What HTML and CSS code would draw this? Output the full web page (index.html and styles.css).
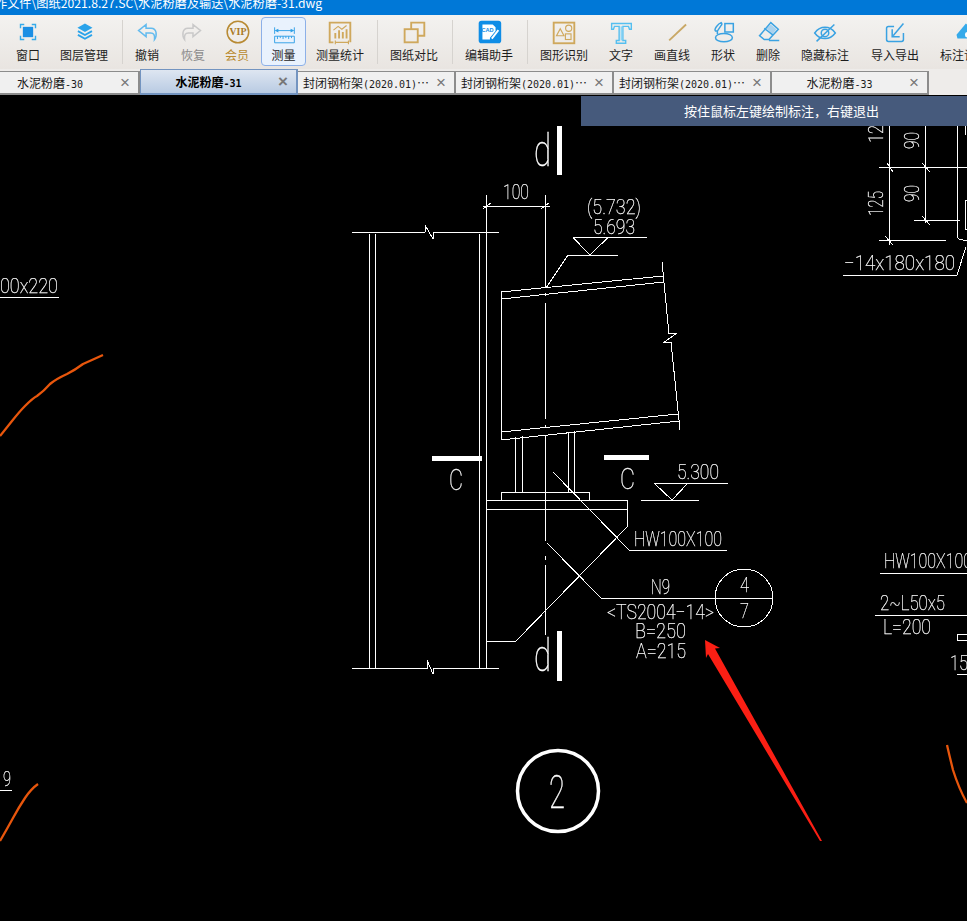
FILE: index.html
```html
<!DOCTYPE html>
<html lang="zh">
<head>
<meta charset="utf-8">
<title>水泥粉磨-31.dwg</title>
<link rel="stylesheet" href="styles.css">
</head>
<body>
<div class="app">
  <header class="titlebar"><span class="title-text">作文件\图纸2021.8.27.SC\水泥粉磨及输送\水泥粉磨-31.dwg</span></header>

  <nav class="toolbar">
    <div class="tool w56">
      <svg class="ico" viewBox="0 0 32 32"><path class="ln-blue" d="M8 12V8h4M20 8h4v4M24 20v4h-4M12 24H8v-4"/><rect x="10.500" y="10.500" width="11" height="11" class="fill-blue"/></svg>
      <span class="lbl">窗口</span>
    </div>
    <div class="tool w56">
      <svg class="ico" viewBox="0 0 32 32"><path class="fill-sky" d="M17 7l8 4.500-8 4.500-8-4.500z"/><path class="ln-sky2" d="M9.500 15l7.500 4.200 7.500-4.200M9.500 19l7.500 4.200 7.500-4.200"/></svg>
      <span class="lbl">图层管理</span>
    </div>
    <i class="sep ml10"></i>
    <div class="tool w48">
      <svg class="ico" viewBox="0 0 32 32"><path class="ln-light" d="M15 8l-8 6.500 8 6.500v-4h5c3 0 4.500 2 4 7 3-4 2.500-12-3.500-12H15z"/></svg>
      <span class="lbl">撤销</span>
    </div>
    <div class="tool w44">
      <svg class="ico" viewBox="0 0 32 32"><path class="ln-grey" d="M16 8l8 6.500-8 6.500v-4h-5c-3 0-4.500 2-4 7-3-4-2.500-12 3.500-12H16z"/></svg>
      <span class="lbl muted">恢复</span>
    </div>
    <div class="tool w44">
      <svg class="ico" viewBox="0 0 32 32"><circle cx="17" cy="16" r="11.500" class="ring-gold"/><text x="17" y="19.500" class="vip">VIP</text></svg>
      <span class="lbl gold">会员</span>
    </div>
    <div class="tool w45 ml2 selected">
      <svg class="ico" viewBox="0 0 32 32"><path class="ln-dim" d="M6 11v7M27 11v7M8 14.500h17"/><path class="fill-dim" d="M6 14.500l4-2v4zM27 14.500l-4-2v4z"/><path class="ln-dim" d="M6 20.500h21v7H6zM9 20.500v3M12 20.500v2M15 20.500v3M18 20.500v2M21 20.500v3M24 20.500v2"/></svg>
      <span class="lbl">测量</span>
    </div>
    <div class="tool w48 ml10">
      <svg class="ico" viewBox="0 0 32 32"><path class="ln-gold" d="M27 27V6H5v21h4"/><path class="fill-gold" d="M10 17h2v6h-2zM14 14h2v9h-2zM18 16h2v7h-2zM22 13h2v10h-2z"/><path class="ln-gold1" d="M9 14l5-4 4 3 5-4M11 27h14M11 25v4M25 25v4"/></svg>
      <span class="lbl">测量统计</span>
    </div>
    <i class="sep ml13"></i>
    <div class="tool w48 ml12">
      <svg class="ico" viewBox="0 0 32 32"><rect x="6" y="13" width="14" height="14" class="ln-gold"/><path class="ln-gold" d="M13 13V6h14v14h-7"/></svg>
      <span class="lbl">图纸对比</span>
    </div>
    <i class="sep ml14"></i>
    <div class="tool w48 ml12">
      <svg class="ico" viewBox="0 0 32 32"><rect x="5" y="4" width="24" height="24" rx="3" class="fill-app"/><path class="fill-white" d="M9 8h11l3 3v4l-6 7v2H9z"/><text x="14.500" y="16" class="cadmark">CAD</text><path class="ln-white" d="M19 23l7-9"/></svg>
      <span class="lbl">编辑助手</span>
    </div>
    <i class="sep ml14"></i>
    <div class="tool w48 ml12">
      <svg class="ico" viewBox="0 0 32 32"><rect x="5" y="6" width="22" height="22" class="ln-gold"/><path class="ln-gold1" d="M12 12.500l4 7.500H8z"/><circle cx="21" cy="12" r="3.300" class="ln-gold1"/><rect x="17.500" y="18" width="6" height="6" class="ln-gold1"/></svg>
      <span class="lbl">图形识别</span>
    </div>
    <div class="tool w40 ml13">
      <svg class="ico" viewBox="0 0 32 32"><path class="ln-cyan" d="M6 7h21v6h-2l-1-3h-6v15h3v3H11v-3h3V10H9l-1 3H6z"/><path class="ln-cyan1" d="M16.500 10v15"/></svg>
      <span class="lbl">文字</span>
    </div>
    <div class="tool w44 ml9">
      <svg class="ico" viewBox="0 0 32 32"><path class="ln-tan" d="M13 25L31 8"/></svg>
      <span class="lbl">画直线</span>
    </div>
    <div class="tool w44 ml7">
      <svg class="ico" viewBox="0 0 32 32"><rect x="18" y="7" width="9" height="9" class="ln-shape"/><path class="ln-shape" d="M8 15c-2-2 3-8 6-9 1 1 1 2 0 3l-4 6zM10 18v-3"/><ellipse cx="17" cy="22" rx="9" ry="4.500" class="ln-shape"/></svg>
      <span class="lbl">形状</span>
    </div>
    <div class="tool w44 ml1">
      <svg class="ico" viewBox="0 0 32 32"><path class="fill-hatch" d="M19 8l6 5-4 5-7-6z"/><path class="ln-shape" d="M19 6l8 7-10 11h-5l-5-4zM12 12l9 7M17 25h11"/></svg>
      <span class="lbl">删除</span>
    </div>
    <div class="tool w48 ml11">
      <svg class="ico" viewBox="0 0 32 32"><path class="ln-shape" d="M5 17c6-8 16-8 22 0-6 8-16 8-22 0z"/><circle cx="16" cy="17" r="4" class="ln-shape"/><path class="ln-shape" d="M26 8L7 26"/></svg>
      <span class="lbl">隐藏标注</span>
    </div>
    <div class="tool w48 ml22">
      <svg class="ico" viewBox="0 0 32 32"><path class="ln-shape" d="M15 10H9a2 2 0 0 0-2 2v12a2 2 0 0 0 2 2h14a2 2 0 0 0 2-2v-7"/><path class="ln-shape" d="M14 20L25 7"/><path class="ln-shape" d="M13 13v8h8"/></svg>
      <span class="lbl">导入导出</span>
    </div>
    <div class="tool w48 ml21">
      <svg class="ico" viewBox="0 0 32 32"><path class="fill-cyan" d="M18 7l8 6 4 10H9l-1-4z"/><circle cx="20" cy="19" r="3" class="fill-white"/></svg>
      <span class="lbl">标注记录</span>
    </div>
  </nav>

  <div class="tabs">
    <div class="tab tab-first"><span class="tab-name">水泥粉磨<span class="lat">-30</span></span><span class="close">×</span></div>
    <div class="tab active"><span class="tab-name">水泥粉磨<span class="lat">-31</span></span><span class="close">×</span></div>
    <div class="tab"><span class="tab-name">封闭钢桁架<span class="lat">(2020.01)</span>⋯</span><span class="close">×</span></div>
    <div class="tab"><span class="tab-name">封闭钢桁架<span class="lat">(2020.01)</span>⋯</span><span class="close">×</span></div>
    <div class="tab"><span class="tab-name">封闭钢桁架<span class="lat">(2020.01)</span>⋯</span><span class="close">×</span></div>
    <div class="tab tab-last"><span class="tab-name">水泥粉磨<span class="lat">-33</span></span><span class="close">×</span></div>
  </div>

  <main class="canvas">
    <svg class="drawing" viewBox="0 95 967 826" width="967" height="826">
      <g class="cad-lines">
        <!-- column -->
        <path d="M352 232H425L425.500 226L433 239L434 232H499"/>
        <path d="M352 668H427L427 660L433 674L434 668H499"/>
        <path d="M369.500 234V668M375.500 234V668M479.500 234V668M486.500 222V668"/>
        <!-- dimension 100 -->
        <path d="M483 206H550M486.500 195V222M545.500 195V288M483 209L491 203M541 209L549 203"/>
        <!-- level 5.693 -->
        <path d="M573 237.500H647M573 237.500L590 255L608 237.500M568 255H618M568 255L546 288"/>
        <!-- beam -->
        <path d="M501 292L663 276M501 299L664 282M501 292V440"/>
        <path d="M662 262L669 334L677 333L663 343L671 342L680 430"/>
        <path d="M501 432L678 414M501 440L679 421"/>
        <path d="M545.500 293V296M545.500 303V419M545.500 425V428M545.500 435V541M545.500 556V560M545.500 565V635"/>
        <path d="M515.500 437V492M522.500 436V492M568.500 432V492M574.500 431V492"/>
        <!-- plate and bracket -->
        <path d="M501.500 500V492H589V500M486 500H627V527M486 509H627M627 527L516 641H486"/>
        <path d="M553 472L629 550H727"/>
        <path d="M547 543L601 598H773"/>
        <circle cx="744" cy="598" r="29"/>
        <!-- level 5.300 -->
        <path d="M654 483H728M654 483L672 500L688 483M641 500H699"/>
        <!-- upper right detail -->
        <path d="M889 126V245M925.500 126V223M957 126V234Q957 240 963 240H967M965 126V135M967 200H965V229H967"/>
        <path d="M879 167H967M914 220H960M879 240H946"/>
        <path d="M887 163L893 172M922 163L930 172M922 216L930 225M885 236L893 245"/>
        <path d="M843 275H957L966 247"/>
        <!-- lower right detail -->
        <path d="M880 573H967M875 615H967M967 634H957V640H967M957 674H967"/>
        <!-- left details -->
        <path d="M0 297H59M0 790H12"/>
      </g>

      <path class="bar" d="M557 126h5v49h-5zM557 631h5v50h-5zM432 456h50v5h-50zM604 455h45v5h-45z"/>

      <circle class="ring" cx="558" cy="791" r="40.500"/>

      <path class="orange" d="M0 436L12 421Q20 411 25 406Q33 398 37 396Q44 391 50 384Q56 379 67 374Q75 370 83 364Q92 360 103 355"/>
      <path class="orange" d="M0 841Q7 829 13 818Q19 807 25 798Q31 789 38 784"/>
      <path class="orange" d="M947 745Q950 758 953 770Q959 789 967 803"/>

      <path class="arrow" d="M705 640L720 648L715 648.500L822 841L820 841L708 654L706 658Z"/>

      <g class="cad-text">
        <text x="534" y="166" textLength="17" lengthAdjust="spacingAndGlyphs" class="big">d</text>
        <text x="534" y="671" textLength="17" lengthAdjust="spacingAndGlyphs" class="big">d</text>
        <text x="449" y="490" textLength="14" lengthAdjust="spacingAndGlyphs" class="mid">C</text>
        <text x="620" y="489" textLength="15" lengthAdjust="spacingAndGlyphs" class="mid">C</text>
        <text x="503" y="199" textLength="26" lengthAdjust="spacingAndGlyphs">100</text>
        <text x="587" y="214" textLength="54" lengthAdjust="spacingAndGlyphs">(5.732)</text>
        <text x="593" y="234" textLength="42" lengthAdjust="spacingAndGlyphs">5.693</text>
        <text x="677" y="479" textLength="42" lengthAdjust="spacingAndGlyphs">5.300</text>
        <text x="634" y="546" textLength="88" lengthAdjust="spacingAndGlyphs">HW100X100</text>
        <text x="651" y="594" textLength="19" lengthAdjust="spacingAndGlyphs">N9</text>
        <text x="740" y="592" textLength="9" lengthAdjust="spacingAndGlyphs">4</text>
        <text x="740" y="618" textLength="9" lengthAdjust="spacingAndGlyphs">7</text>
        <text x="607" y="619" textLength="107" lengthAdjust="spacingAndGlyphs">&lt;TS2004−14&gt;</text>
        <text x="635" y="638" textLength="51" lengthAdjust="spacingAndGlyphs">B=250</text>
        <text x="636" y="658" textLength="50" lengthAdjust="spacingAndGlyphs">A=215</text>
        <text x="549" y="808" textLength="16" lengthAdjust="spacingAndGlyphs" class="big2">2</text>
        <text x="0" y="293" textLength="58" lengthAdjust="spacingAndGlyphs">00x220</text>
        <text x="3" y="786" textLength="8" lengthAdjust="spacingAndGlyphs">9</text>
        <text x="844" y="270" textLength="111" lengthAdjust="spacingAndGlyphs">−14x180x180</text>
        <text x="884" y="568" textLength="88" lengthAdjust="spacingAndGlyphs">HW100X100</text>
        <text x="880" y="610" textLength="65" lengthAdjust="spacingAndGlyphs">2~L50x5</text>
        <text x="883" y="634" textLength="48" lengthAdjust="spacingAndGlyphs">L=200</text>
        <text x="950" y="670" textLength="18" lengthAdjust="spacingAndGlyphs">15</text>
        <text transform="translate(883 143) rotate(-90)" textLength="18" lengthAdjust="spacingAndGlyphs">12</text>
        <text transform="translate(883 216) rotate(-90)" textLength="25" lengthAdjust="spacingAndGlyphs">125</text>
        <text transform="translate(919 149) rotate(-90)" textLength="17" lengthAdjust="spacingAndGlyphs">90</text>
        <text transform="translate(919 202) rotate(-90)" textLength="17" lengthAdjust="spacingAndGlyphs">90</text>
      </g>
    </svg>
    <div class="hint">按住鼠标左键绘制标注，右键退出</div>
  </main>
</div>
</body>
</html>
```
FILE: styles.css
```css
* { box-sizing: border-box; }
html, body { margin: 0; height: 100%; background: #000; overflow: hidden; }
body { font-family: "Noto Sans CJK SC", "Noto Sans", sans-serif; }
.app { width: 967px; height: 921px; display: flex; flex-direction: column; overflow: hidden; }

.titlebar { height: 15px; flex: none; background: #0078d7; color: #fff; font-size: 12.200px; line-height: 15px; overflow: hidden; white-space: nowrap; }
.title-text { display: block; margin: -4px 0 0 -5px; }

.toolbar { height: 54px; flex: none; display: flex; align-items: flex-start; overflow: hidden; background: linear-gradient(#f3f2f0, #e9e5e1); }
.tool { flex: none; height: 49px; margin-top: 2px; display: flex; flex-direction: column; align-items: center; }
.ico { width: 32px; height: 30px; flex: none; display: block; overflow: visible; }
.lbl { font-size: 12px; line-height: 16px; color: #1d1d1d; white-space: nowrap; }
.muted { color: #8b8b8b; }
.gold { color: #b98a2f; }
.selected { background: #e9f2fd; border: 1px solid #8cb0e8; border-radius: 4px; margin-top: 2px; }
.selected .ico { margin-top: -1px; }
.sep { flex: none; width: 1px; height: 44px; margin-top: 5px; background: #d6d3cf; }

.w40 { width: 40px; } .w44 { width: 44px; } .w45 { width: 45px; } .w48 { width: 48px; } .w56 { width: 56px; }
.ml1 { margin-left: 1px; } .ml2 { margin-left: 2px; } .ml7 { margin-left: 7px; } .ml9 { margin-left: 9px; }
.ml10 { margin-left: 10px; } .ml11 { margin-left: 11px; } .ml12 { margin-left: 12px; } .ml13 { margin-left: 13px; }
.ml14 { margin-left: 14px; } .ml21 { margin-left: 21px; } .ml22 { margin-left: 22px; }

.ln-blue, .ln-light, .ln-grey, .ln-dim, .ln-gold, .ln-gold1, .ln-cyan, .ln-cyan1, .ln-tan, .ln-shape, .ln-sky2, .ln-white, .ring-gold { fill: none; }
.ln-blue { stroke: #35aaea; stroke-width: 1.500; }
.fill-blue { fill: #1b8fe4; }
.fill-sky { fill: #2aa3ea; }
.ln-sky2 { stroke: #2aa3ea; stroke-width: 2; }
.ln-light { stroke: #63bbee; stroke-width: 1.600; }
.ln-grey { stroke: #c9c9c9; stroke-width: 1.600; }
.ring-gold { stroke: #b88a33; stroke-width: 1.600; }
.vip { font-family: "Liberation Serif", serif; font-weight: 700; font-size: 10.500px; fill: #a9791f; text-anchor: middle; }
.ln-dim { stroke: #2f9fe6; stroke-width: 1; }
.fill-dim { fill: #2f9fe6; }
.ln-gold { stroke: #cfa85c; stroke-width: 2; }
.ln-gold1 { stroke: #cfa85c; stroke-width: 1.200; }
.fill-gold { fill: #cfa85c; }
.fill-app { fill: #0f8de6; }
.fill-white { fill: #fff; }
.ln-white { stroke: #fff; stroke-width: 2; }
.cadmark { font-family: "Liberation Sans", sans-serif; font-size: 6px; font-weight: 700; fill: #0f8de6; text-anchor: middle; }
.ln-cyan { stroke: #55bff0; stroke-width: 1.500; }
.ln-cyan1 { stroke: #8fd6f6; stroke-width: 2; }
.ln-tan { stroke: #c9a866; stroke-width: 2; }
.ln-shape { stroke: #3aa2e2; stroke-width: 1.600; }
.fill-hatch { fill: #a9d2ee; }
.fill-cyan { fill: #35aaea; }

.tabs { height: 26px; flex: none; display: flex; align-items: flex-end; background: #eeecea; }
.tab { flex: none; width: 158px; height: 24px; display: flex; align-items: center; background: #f0f0f0; border-top: 1px solid #8c8c8c; border-right: 2px solid #8c8c8c; border-bottom: 2px solid #8c8c8c; font-size: 12px; color: #1a1a1a; white-space: nowrap; }
.tab-first { margin-left: -18px; }
.tab-last { width: 157px; }
.tab-name { flex: 1; text-align: center; }
.lat { font-family: "DejaVu Sans Mono", monospace; font-size: 10px; }
.close { flex: none; width: 20px; padding-right: 6px; text-align: center; font-family: "Liberation Sans", sans-serif; font-size: 17px; line-height: 18px; color: #777; }
.active { height: 26px; background: linear-gradient(#dee6f1, #b9cbe3); border: 1px solid #7394c0; border-bottom-width: 2px; border-right-width: 2px; font-weight: 700; color: #000; }
.active .lat { font-weight: 700; }

.canvas { position: relative; flex: 1; background: #000; overflow: hidden; }
.drawing { display: block; }
.cad-lines { fill: none; stroke: #fff; stroke-width: 1; shape-rendering: crispEdges; }
.bar { fill: #fff; }
.ring { fill: none; stroke: #fff; stroke-width: 3.500; }
.orange { fill: none; stroke: #e8560c; stroke-width: 2.300; stroke-linejoin: round; }
.arrow { fill: #fb1f14; }
.cad-text { font-family: Roboto, "Liberation Sans", sans-serif; font-weight: 100; font-size: 21px; fill: #fff; stroke: #fff; stroke-width: .25; filter: grayscale(1); }
.cad-text .big { font-size: 44px; stroke-width: 0.400; }
.cad-text .mid { font-size: 30px; stroke-width: 0.300; }
.cad-text .big2 { font-size: 46px; stroke-width: 0.400; }
.hint { position: absolute; left: 581px; top: 1px; right: 0; height: 30px; padding-left: 103px; background: #465a7c; color: #fff; font-size: 13px; line-height: 30px; white-space: nowrap; }
```
